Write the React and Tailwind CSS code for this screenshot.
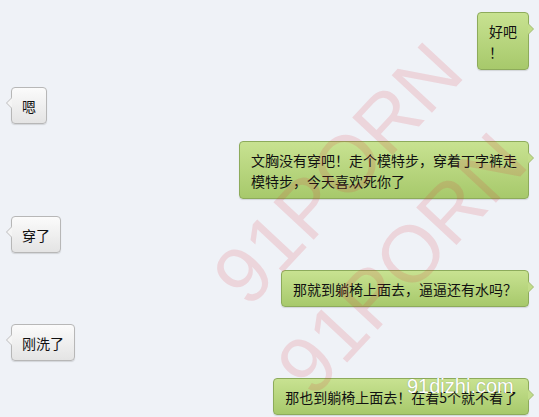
const messages = [
  { side: "right", lines: ["好吧", "！"] },
  { side: "left", lines: ["嗯"] },
  { side: "right", lines: ["文胸没有穿吧！走个模特步，穿着丁字裤走", "模特步，今天喜欢死你了"] },
  { side: "left", lines: ["穿了"] },
  { side: "right", lines: ["那就到躺椅上面去，逼逼还有水吗？"] },
  { side: "left", lines: ["刚洗了"] },
  { side: "right", lines: ["那也到躺椅上面去！在看5个就不看了"] },
];

function Bubble({ side, lines }) {
  const right = side === "right";
  return (
    <div className={right ? "self-end mr-[10px] relative" : "self-start ml-[11px] relative"}>
      <div
        className={
          right
            ? "rounded-[4px] border border-[#8dab5b] bg-gradient-to-b from-[#c8e291] to-[#a7c96b] px-[11px] pt-[8px] pb-[6px] shadow-[0_1px_1px_rgba(0,0,0,0.12)]"
            : "rounded-[4px] border border-[#b7b7b7] bg-gradient-to-b from-[#fbfbfb] to-[#e4e4e4] px-[10px] pt-[8px] pb-[6px] shadow-[0_1px_1px_rgba(0,0,0,0.12)]"
        }
      >
        {lines.map((l, i) => (
          <div key={i} className="text-[14px] leading-[21px] text-[#111] whitespace-nowrap">
            {l}
          </div>
        ))}
      </div>
      {right ? (
        <svg className="absolute right-[-5px] top-[11px]" width="6" height="12" viewBox="0 0 6 12">
          <path d="M0 0.5 L5.5 6 L0 11.5" fill="#c2dd8a" stroke="#9fbb70" strokeWidth="1" />
        </svg>
      ) : (
        <svg className="absolute left-[-5px] top-[10px]" width="6" height="12" viewBox="0 0 6 12">
          <path d="M6 0.5 L0.5 6 L6 11.5" fill="#f5f5f5" stroke="#bdbdbd" strokeWidth="1" />
        </svg>
      )}
    </div>
  );
}

export default function App() {
  return (
    <div
      className="relative w-[539px] h-[417px] overflow-hidden bg-[#eff2f7] flex flex-col gap-[17px] pt-[12px]"
      style={{ fontFamily: '"Noto Sans CJK SC", "Noto Sans", sans-serif' }}
    >
      {messages.map((m, i) => (
        <Bubble key={i} {...m} />
      ))}

      {/* watermarks */}
      <div className="pointer-events-none absolute left-[338px] top-[174px] -translate-x-1/2 -translate-y-1/2 -rotate-[47deg] text-[80px] leading-none text-[rgba(220,50,60,0.15)] whitespace-nowrap font-['Liberation_Sans',sans-serif]">
        91PORN
      </div>
      <div className="pointer-events-none absolute left-[402px] top-[264px] -translate-x-1/2 -translate-y-1/2 -rotate-[47deg] text-[80px] leading-none text-[rgba(220,50,60,0.15)] whitespace-nowrap font-['Liberation_Sans',sans-serif]">
        91PORN
      </div>
      <div className="pointer-events-none absolute left-[407px] top-[376px] text-[20px] leading-none text-white whitespace-nowrap font-['Liberation_Sans',sans-serif] [text-shadow:0_0_1px_rgba(0,0,0,0.35)]">
        91dizhi.com
      </div>
    </div>
  );
}
